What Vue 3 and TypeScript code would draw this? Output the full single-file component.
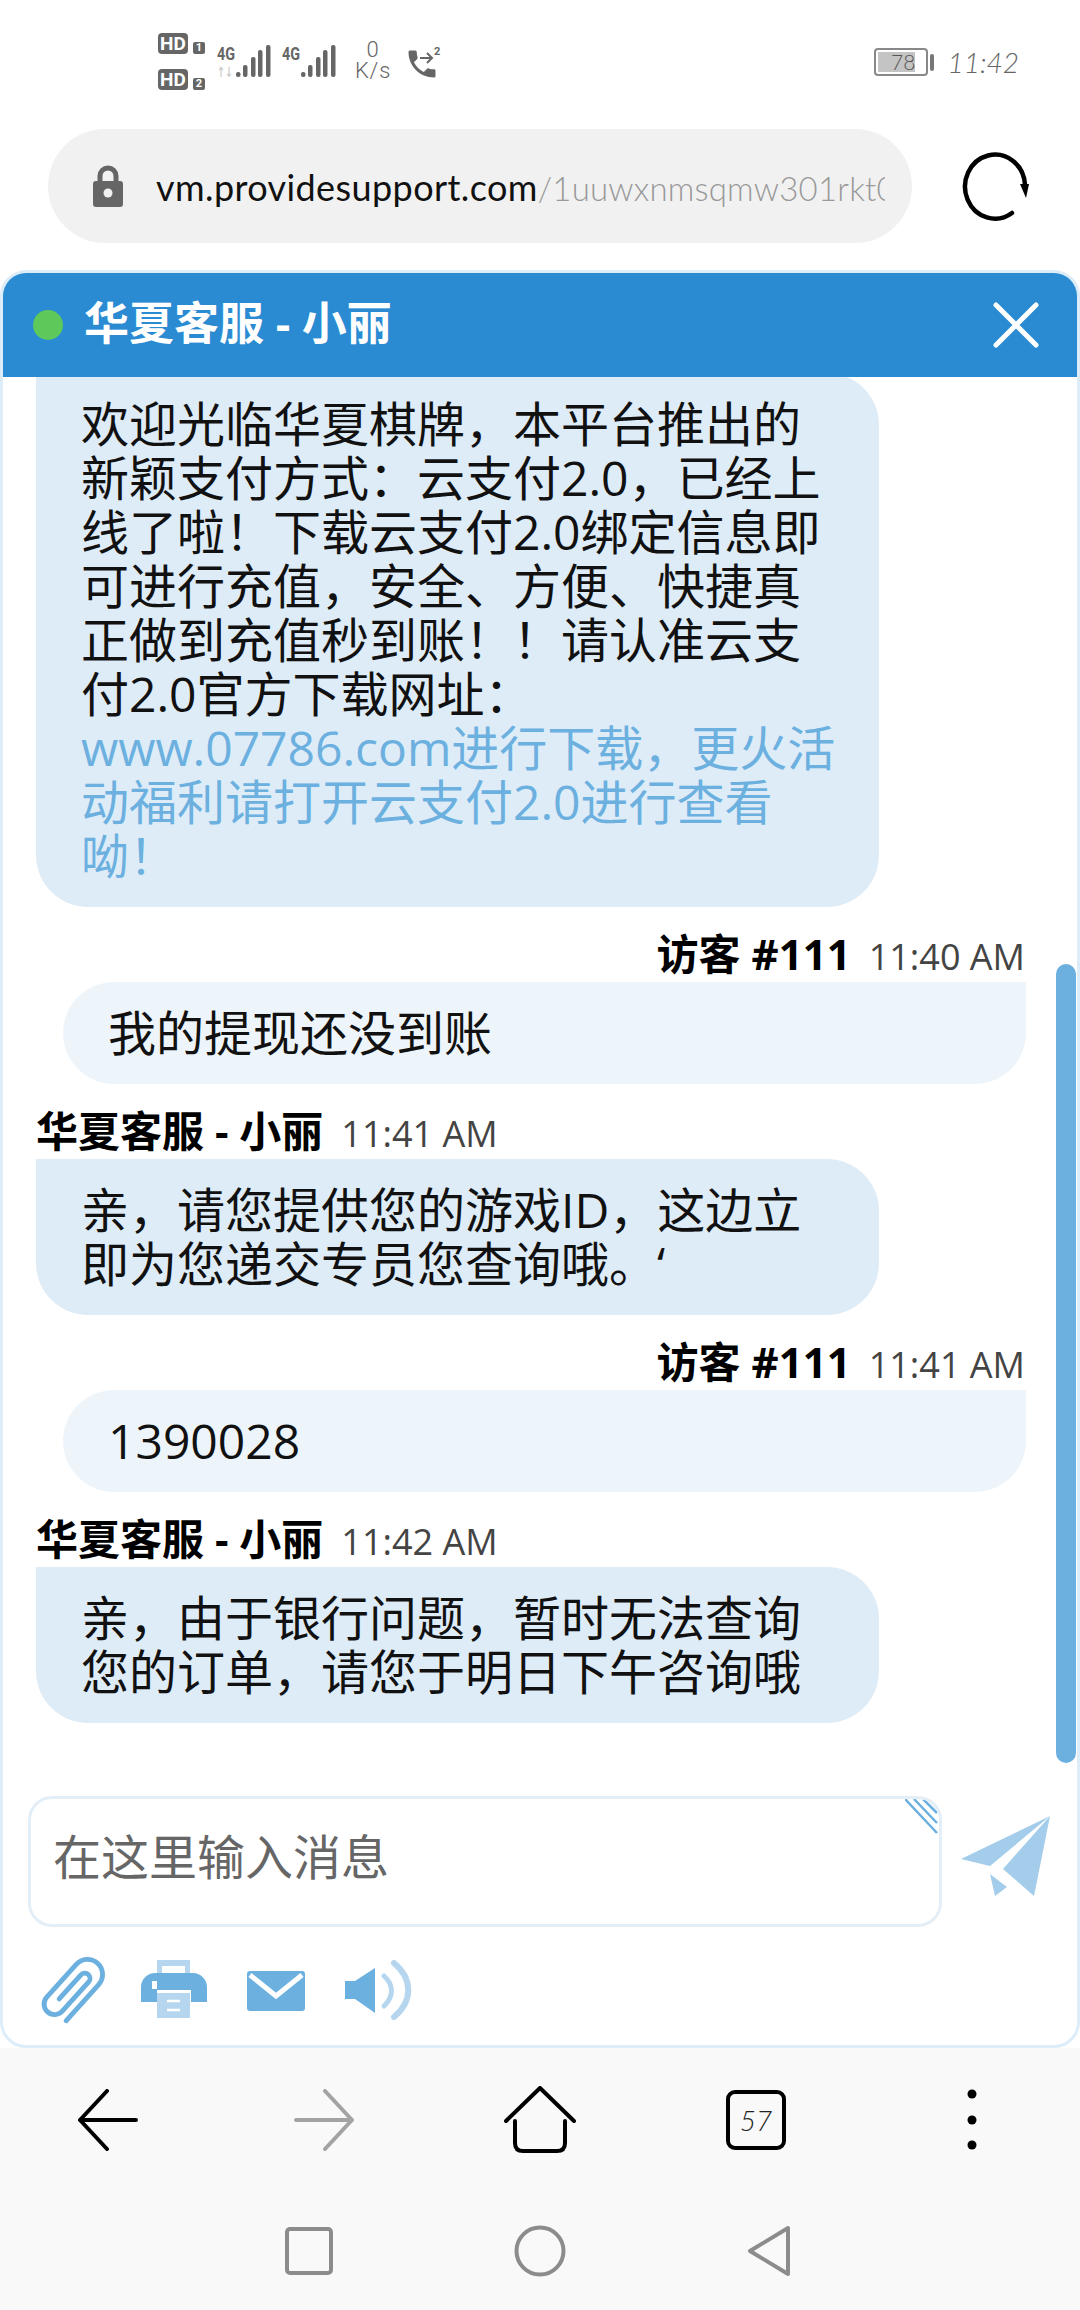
<script setup lang="ts">
interface Msg {
  side: 'agent' | 'visitor'
  name?: string
  time?: string
  text: string
  link?: string
}
const agentName = '华夏客服 - 小丽'
const visitorName = '访客 #111'
const messages: Msg[] = [
  { side: 'agent', text: '欢迎光临华夏棋牌，本平台推出的新颖支付方式：云支付2.0，已经上线了啦！下载云支付2.0绑定信息即可进行充值，安全、方便、快捷真正做到充值秒到账！！请认准云支付2.0官方下载网址：', link: 'www.07786.com进行下载，更火活动福利请打开云支付2.0进行查看呦！' },
  { side: 'visitor', name: visitorName, time: '11:40 AM', text: '我的提现还没到账' },
  { side: 'agent', name: agentName, time: '11:41 AM', text: '亲，请您提供您的游戏ID，这边立即为您递交专员您查询哦。‘' },
  { side: 'visitor', name: visitorName, time: '11:41 AM', text: '1390028' },
  { side: 'agent', name: agentName, time: '11:42 AM', text: '亲，由于银行问题，暂时无法查询您的订单，请您于明日下午咨询哦' },
]
</script>

<template>
  <div class="page">
    <div class="status">
      <div class="hd-col">
        <div class="hd-row"><span class="hd">HD</span><span class="sim">1</span></div>
        <div class="hd-row low"><span class="hd">HD</span><span class="sim">2</span></div>
      </div>
      <svg class="sig" width="54" height="36" viewBox="0 0 54 36">
        <text x="0" y="15" class="sig-t" textLength="18" lengthAdjust="spacingAndGlyphs">4G</text>
        <text x="0" y="32" class="sig-a" textLength="16" lengthAdjust="spacingAndGlyphs">↑↓</text>
        <g fill="#666">
          <rect x="19" y="27" width="4.5" height="5" rx="2" />
          <rect x="26" y="20" width="4.5" height="12" rx="2" />
          <rect x="34" y="12" width="4.5" height="20" rx="2" />
          <rect x="41" y="5" width="4.5" height="27" rx="2" />
          <rect x="49" y="0" width="4.5" height="32" rx="2" />
        </g>
      </svg>
      <svg class="sig second" width="54" height="36" viewBox="0 0 54 36">
        <text x="0" y="15" class="sig-t" textLength="18" lengthAdjust="spacingAndGlyphs">4G</text>
        <g fill="#666">
          <rect x="19" y="27" width="4.5" height="5" rx="2" />
          <rect x="26" y="20" width="4.5" height="12" rx="2" />
          <rect x="34" y="12" width="4.5" height="20" rx="2" />
          <rect x="41" y="5" width="4.5" height="27" rx="2" />
          <rect x="49" y="0" width="4.5" height="32" rx="2" />
        </g>
      </svg>
      <div class="speed"><span class="zero">0</span><span>K/s</span></div>
      <svg class="phone" width="36" height="36" viewBox="0 0 36 36">
        <path fill="#666" transform="translate(-4 -1) scale(1.5)" d="M6.62 10.79c1.44 2.83 3.76 5.14 6.59 6.59l2.2-2.2c.27-.27.67-.36 1.02-.24 1.12.37 2.33.57 3.57.57.55 0 1 .45 1 1V20c0 .55-.45 1-1 1-9.39 0-17-7.61-17-17 0-.55.45-1 1-1h3.5c.55 0 1 .45 1 1 0 1.25.2 2.45.57 3.57.11.35.03.74-.25 1.02l-2.2 2.2z" />
        <path fill="none" stroke="#666" stroke-width="2" d="M12 11h11M19 6l5 5-5 5" />
        <text x="26" y="8" class="ph-t">2</text>
      </svg>
      <div class="status-right">
        <div class="battery"><div class="battery-fill">78</div></div>
        <div class="nub"></div>
        <div class="clock">11:42</div>
      </div>
    </div>

    <div class="urlrow">
      <div class="url">
        <svg width="30" height="42" viewBox="0 0 30 42">
          <path fill="none" stroke="#666" stroke-width="5" d="M7 20V11a8 8 0 0 1 16 0v9" />
          <rect x="0" y="16" width="30" height="26" rx="3" fill="#666" />
          <circle cx="15" cy="28" r="4.5" fill="#f1f1f1" />
        </svg>
        <div class="url-text"><span class="host">vm.providesupport.com</span><span class="path">/1uuwxnmsqmw301rkt0a9c</span></div>
      </div>
      <svg class="reload" width="70" height="70" viewBox="0 0 70 70">
        <path fill="none" stroke="#000" stroke-width="4.5" stroke-linecap="round" d="M63 34A30 32 0 1 0 50 62" />
        <path fill="#000" d="M58 33h9l-3 14z" />
      </svg>
    </div>

    <div class="widget">
      <div class="head">
        <span class="dot"></span>
        <span class="title">华夏客服 - 小丽</span>
        <svg class="close" width="46" height="46" viewBox="0 0 46 46">
          <path stroke="#fff" stroke-width="5" stroke-linecap="round" d="M3 3l40 40M43 3L3 43" />
        </svg>
      </div>

      <div class="msgs">
        <template v-for="(m, i) in messages" :key="i">
          <div v-if="m.name" class="meta" :class="m.side">
            <b class="name">{{ m.name }}</b><span class="time">{{ m.time }}</span>
          </div>
          <div class="bubble" :class="m.side">{{ m.text }}<span v-if="m.link" class="link">{{ m.link }}</span></div>
        </template>
        <div class="scrollbar"></div>
      </div>

      <div class="composer">
        <div class="inputrow">
          <div class="input">
            <span class="ph">在这里输入消息</span>
            <svg class="hatch" width="34" height="36" viewBox="0 0 34 36">
              <path fill="none" stroke="#6bb0df" stroke-width="2.5" d="M0 0l32 34M9 0l23 24M18 0l14 14" />
            </svg>
          </div>
          <svg class="send" width="90" height="83" viewBox="0 0 90 83">
            <path fill="#a3cdeb" d="M89 2L0 45l29 7zM42 55L89 2l-16 80z" />
            <path fill="#a3cdeb" d="M29 60l17 13-12 9z" />
          </svg>
        </div>
        <div class="tools">
          <svg class="clip" width="63" height="60" viewBox="-31.5 -30 63 60">
            <path fill="none" stroke="#6bb0df" stroke-width="4.2" stroke-linecap="round" transform="rotate(42) scale(1.16)" d="M13 24V-18a13 13 0 0 0-26 0V20a9 9 0 0 0 18 0V-14a4.5 4.5 0 0 0-9 0V14" />
          </svg>
          <svg width="66" height="58" viewBox="0 0 66 58">
            <rect x="16" y="0" width="33" height="14" fill="#b5d6ee" />
            <rect x="21" y="6" width="23" height="8" fill="#fff" />
            <path fill="#6bb0df" d="M0 42V27C0 19 7 13 14 13H52C59 13 66 19 66 27V42H50V30H16V42z" />
            <rect x="11" y="21" width="5" height="8" fill="#fff" />
            <rect x="16" y="33" width="33" height="25" fill="#b5d6ee" />
            <path stroke="#fff" stroke-width="2.5" d="M26 41h13M26 50h13" />
          </svg>
          <svg class="mail" width="58" height="40" viewBox="0 0 58 40">
            <rect width="58" height="40" rx="3" fill="#6bb0df" />
            <path fill="none" stroke="#fff" stroke-width="5" d="M3 4l26 21L55 4" />
          </svg>
          <svg width="67" height="60" viewBox="0 0 67 60">
            <path fill="#6bb0df" d="M0 21h10L30 8v45L10 39H0z" />
            <path fill="none" stroke="#b5d6ee" stroke-width="5" stroke-linecap="round" d="M39 16c10 9 10 20 0 30" />
            <path fill="none" stroke="#b5d6ee" stroke-width="6" stroke-linecap="round" d="M49 3c19 16 19 38 0 54" />
          </svg>
        </div>
      </div>
    </div>

    <div class="bottom">
      <div class="nav1">
        <svg width="60" height="62" viewBox="0 0 60 62">
          <path fill="none" stroke="#000" stroke-width="4" stroke-linecap="round" stroke-linejoin="round" d="M29 2L2 31l27 29M2 31h56" />
        </svg>
        <svg width="60" height="62" viewBox="0 0 60 62">
          <path fill="none" stroke="#a3a3a3" stroke-width="4" stroke-linecap="round" stroke-linejoin="round" d="M31 2l27 29-27 29M58 31H2" />
        </svg>
        <svg width="72" height="68" viewBox="0 0 72 68">
          <path fill="none" stroke="#000" stroke-width="4" stroke-linecap="round" stroke-linejoin="round" d="M2 35L36 2l34 33M11 35v22q0 8 8 8h34q8 0 8-8V35" />
        </svg>
        <div class="tabs">57</div>
        <svg width="10" height="62" viewBox="0 0 10 62">
          <circle cx="5" cy="5" r="4.5" /><circle cx="5" cy="31" r="4.5" /><circle cx="5" cy="56" r="4.5" />
        </svg>
      </div>
      <div class="nav2">
        <svg width="48" height="48" viewBox="0 0 48 48">
          <rect x="2" y="2" width="44" height="44" rx="3" fill="none" stroke="#8c8c8c" stroke-width="4" />
        </svg>
        <svg width="52" height="52" viewBox="0 0 52 52">
          <circle cx="26" cy="26" r="23.5" fill="none" stroke="#8c8c8c" stroke-width="4" />
        </svg>
        <svg width="44" height="52" viewBox="0 0 44 52">
          <path fill="none" stroke="#8c8c8c" stroke-width="4" stroke-linejoin="round" d="M41 3L3 26l38 23z" />
        </svg>
      </div>
    </div>
  </div>
</template>

<style scoped>
.page {
  width: 1080px;
  height: 2310px;
  display: flex;
  flex-direction: column;
  background: #fff;
  font-family: "Open Sans", "Noto Sans CJK SC", sans-serif;
  overflow: hidden;
}
.status {
  height: 129px;
  flex: none;
  display: flex;
  align-items: flex-start;
  padding: 33px 61px 0 158px;
  box-sizing: border-box;
  color: #666;
}
.hd-col { width: 59px; display: flex; flex-direction: column; gap: 15px; }
.hd-row { display: flex; align-items: flex-end; gap: 5px; height: 21px; }
.hd {
  width: 30px; height: 21px; border-radius: 4px; background: #666; color: #fff;
  font: bold 19px/21px "Roboto", sans-serif; text-align: center;
}
.sim {
  width: 12px; height: 12px; border-radius: 2px; background: #666; color: #fff;
  font: bold 11px/12px "Roboto", sans-serif; text-align: center;
}
.sig { margin-top: 12px; flex: none; overflow: visible; }
.sig-t { font: bold 18px "Roboto", sans-serif; fill: #666; }
.sig-a { font: bold 14px "DejaVu Sans", sans-serif; fill: #ccc; }
.second { margin-left: 11px; }
.speed {
  width: 40px; margin: 7px 0 0 17px; display: flex; flex-direction: column; align-items: center;
  font: 300 22px/22px "Roboto", sans-serif; color: #666; letter-spacing: 0.8px;
}
.zero { line-height: 20px; }
.phone { margin: 14px 0 0 15px; flex: none; overflow: visible; }
.ph-t { font: bold 11px "Roboto", sans-serif; fill: #666; }
.status-right { margin-left: auto; margin-top: 14px; display: flex; align-items: center; }
.battery {
  width: 54px; height: 28px; box-sizing: border-box; border: 2px solid #888; border-radius: 4px; padding: 2px;
}
.battery-fill {
  width: 37px; height: 20px; background: #c4c4c4; color: #555;
  font: 300 21px/20px "Lato", sans-serif; text-align: right;
}
.nub { width: 4px; height: 17px; background: #777; border-radius: 2px; margin-left: 2px; }
.clock { margin-left: 13px; font: italic 300 28px/30px "Lato", sans-serif; color: #666; }

.urlrow {
  height: 141px;
  flex: none;
  display: flex;
  align-items: flex-start;
}
.url {
  margin-left: 48px;
  width: 864px;
  height: 114px;
  border-radius: 57px;
  background: #f1f1f1;
  display: flex;
  align-items: center;
  padding: 0 27px 0 45px;
  box-sizing: border-box;
  gap: 33px;
}
.url svg { flex: none; }
.url-text {
  flex: 1;
  overflow: hidden;
  white-space: nowrap;
  font: 36px/50px "Lato", sans-serif;
  letter-spacing: 0.4px;
  padding-top: 2px;
}
.host { color: #111; }
.path { color: #999; font-size: 33px; font-weight: 300; letter-spacing: 0.2px; }
.reload { margin: 22px 0 0 50px; flex: none; }

.widget {
  height: 1778px;
  flex: none;
  box-sizing: border-box;
  border: 3px solid #dcecf8;
  border-radius: 26px;
  display: flex;
  flex-direction: column;
  overflow: hidden;
  background: #fff;
}
.head {
  height: 104px;
  flex: none;
  background: #2a8bd2;
  display: flex;
  align-items: center;
  padding: 0 38px 0 30px;
  color: #fff;
}
.dot { width: 30px; height: 30px; border-radius: 50%; background: #5ec95a; margin-right: 21px; }
.title { font-size: 45px; font-weight: 700; line-height: 60px; flex: 1; padding-bottom: 4px; }
.msgs {
  flex: 1;
  min-height: 0;
  position: relative;
  overflow: hidden;
  display: flex;
  flex-direction: column;
  justify-content: flex-end;
  padding-bottom: 73px;
}
.meta {
  flex: none;
  height: 50px;
  margin-top: 25px;
  display: flex;
  align-items: center;
  gap: 18px;
  line-height: 50px;
}
.meta.agent { margin-left: 33px; }
.meta.visitor { justify-content: flex-end; margin-right: 52px; }
.name { font-size: 42px; font-weight: 700; color: #000; position: relative; top: -3px; }
.time { font-size: 36px; color: #444; }
.bubble {
  flex: none;
  box-sizing: border-box;
  padding: 24px 36px 24px 45px;
  font-size: 48px;
  line-height: 54px;
  color: #111;
}
.bubble.agent {
  margin-left: 33px;
  width: 843px;
  background: #deecf8;
  border-radius: 0 52px 52px 52px;
}
.bubble.visitor {
  margin-left: 60px;
  margin-right: 51px;
  background: #eef5fa;
  border-radius: 52px 0 52px 52px;
}
.link { color: #6bb0df; }
.scrollbar {
  position: absolute;
  right: 1px;
  top: 587px;
  width: 20px;
  height: 799px;
  border-radius: 10px;
  background: #6bb0df;
}
.composer { flex: none; padding: 0 0 25px 25px; }
.inputrow { display: flex; align-items: flex-start; }
.input {
  width: 914px;
  height: 131px;
  box-sizing: border-box;
  border: 3px solid #e4eef7;
  border-radius: 24px;
  position: relative;
  overflow: hidden;
  padding: 31px 0 0 22px;
  font-size: 48px;
  line-height: 54px;
  color: #666;
  flex: none;
}
.hatch { position: absolute; top: 0; right: 0; }
.send { margin: 18px 0 0 19px; flex: none; }
.tools {
  display: flex;
  align-items: flex-start;
  gap: 40px;
  margin: 33px 0 0 14px;
  height: 60px;
}
.clip { margin-right: -4px; overflow: visible; }
.mail { margin-top: 11px; }

.bottom { flex: 1; background: #f9f9f9; }
.nav1 {
  height: 144px;
  display: grid;
  grid-template-columns: repeat(5, 216px);
  justify-items: center;
  align-items: center;
}
.tabs {
  width: 60px; height: 60px; box-sizing: border-box;
  border: 4px solid #000; border-radius: 9px;
  font: italic 300 28px/52px "Lato", sans-serif;
  text-align: center; color: #222;
}
.nav2 {
  height: 118px;
  display: flex;
  justify-content: center;
  align-items: center;
  gap: 181px;
  padding-right: 4px;
}
</style>

<style>
html, body { margin: 0; padding: 0; background: #fff; }
</style>
